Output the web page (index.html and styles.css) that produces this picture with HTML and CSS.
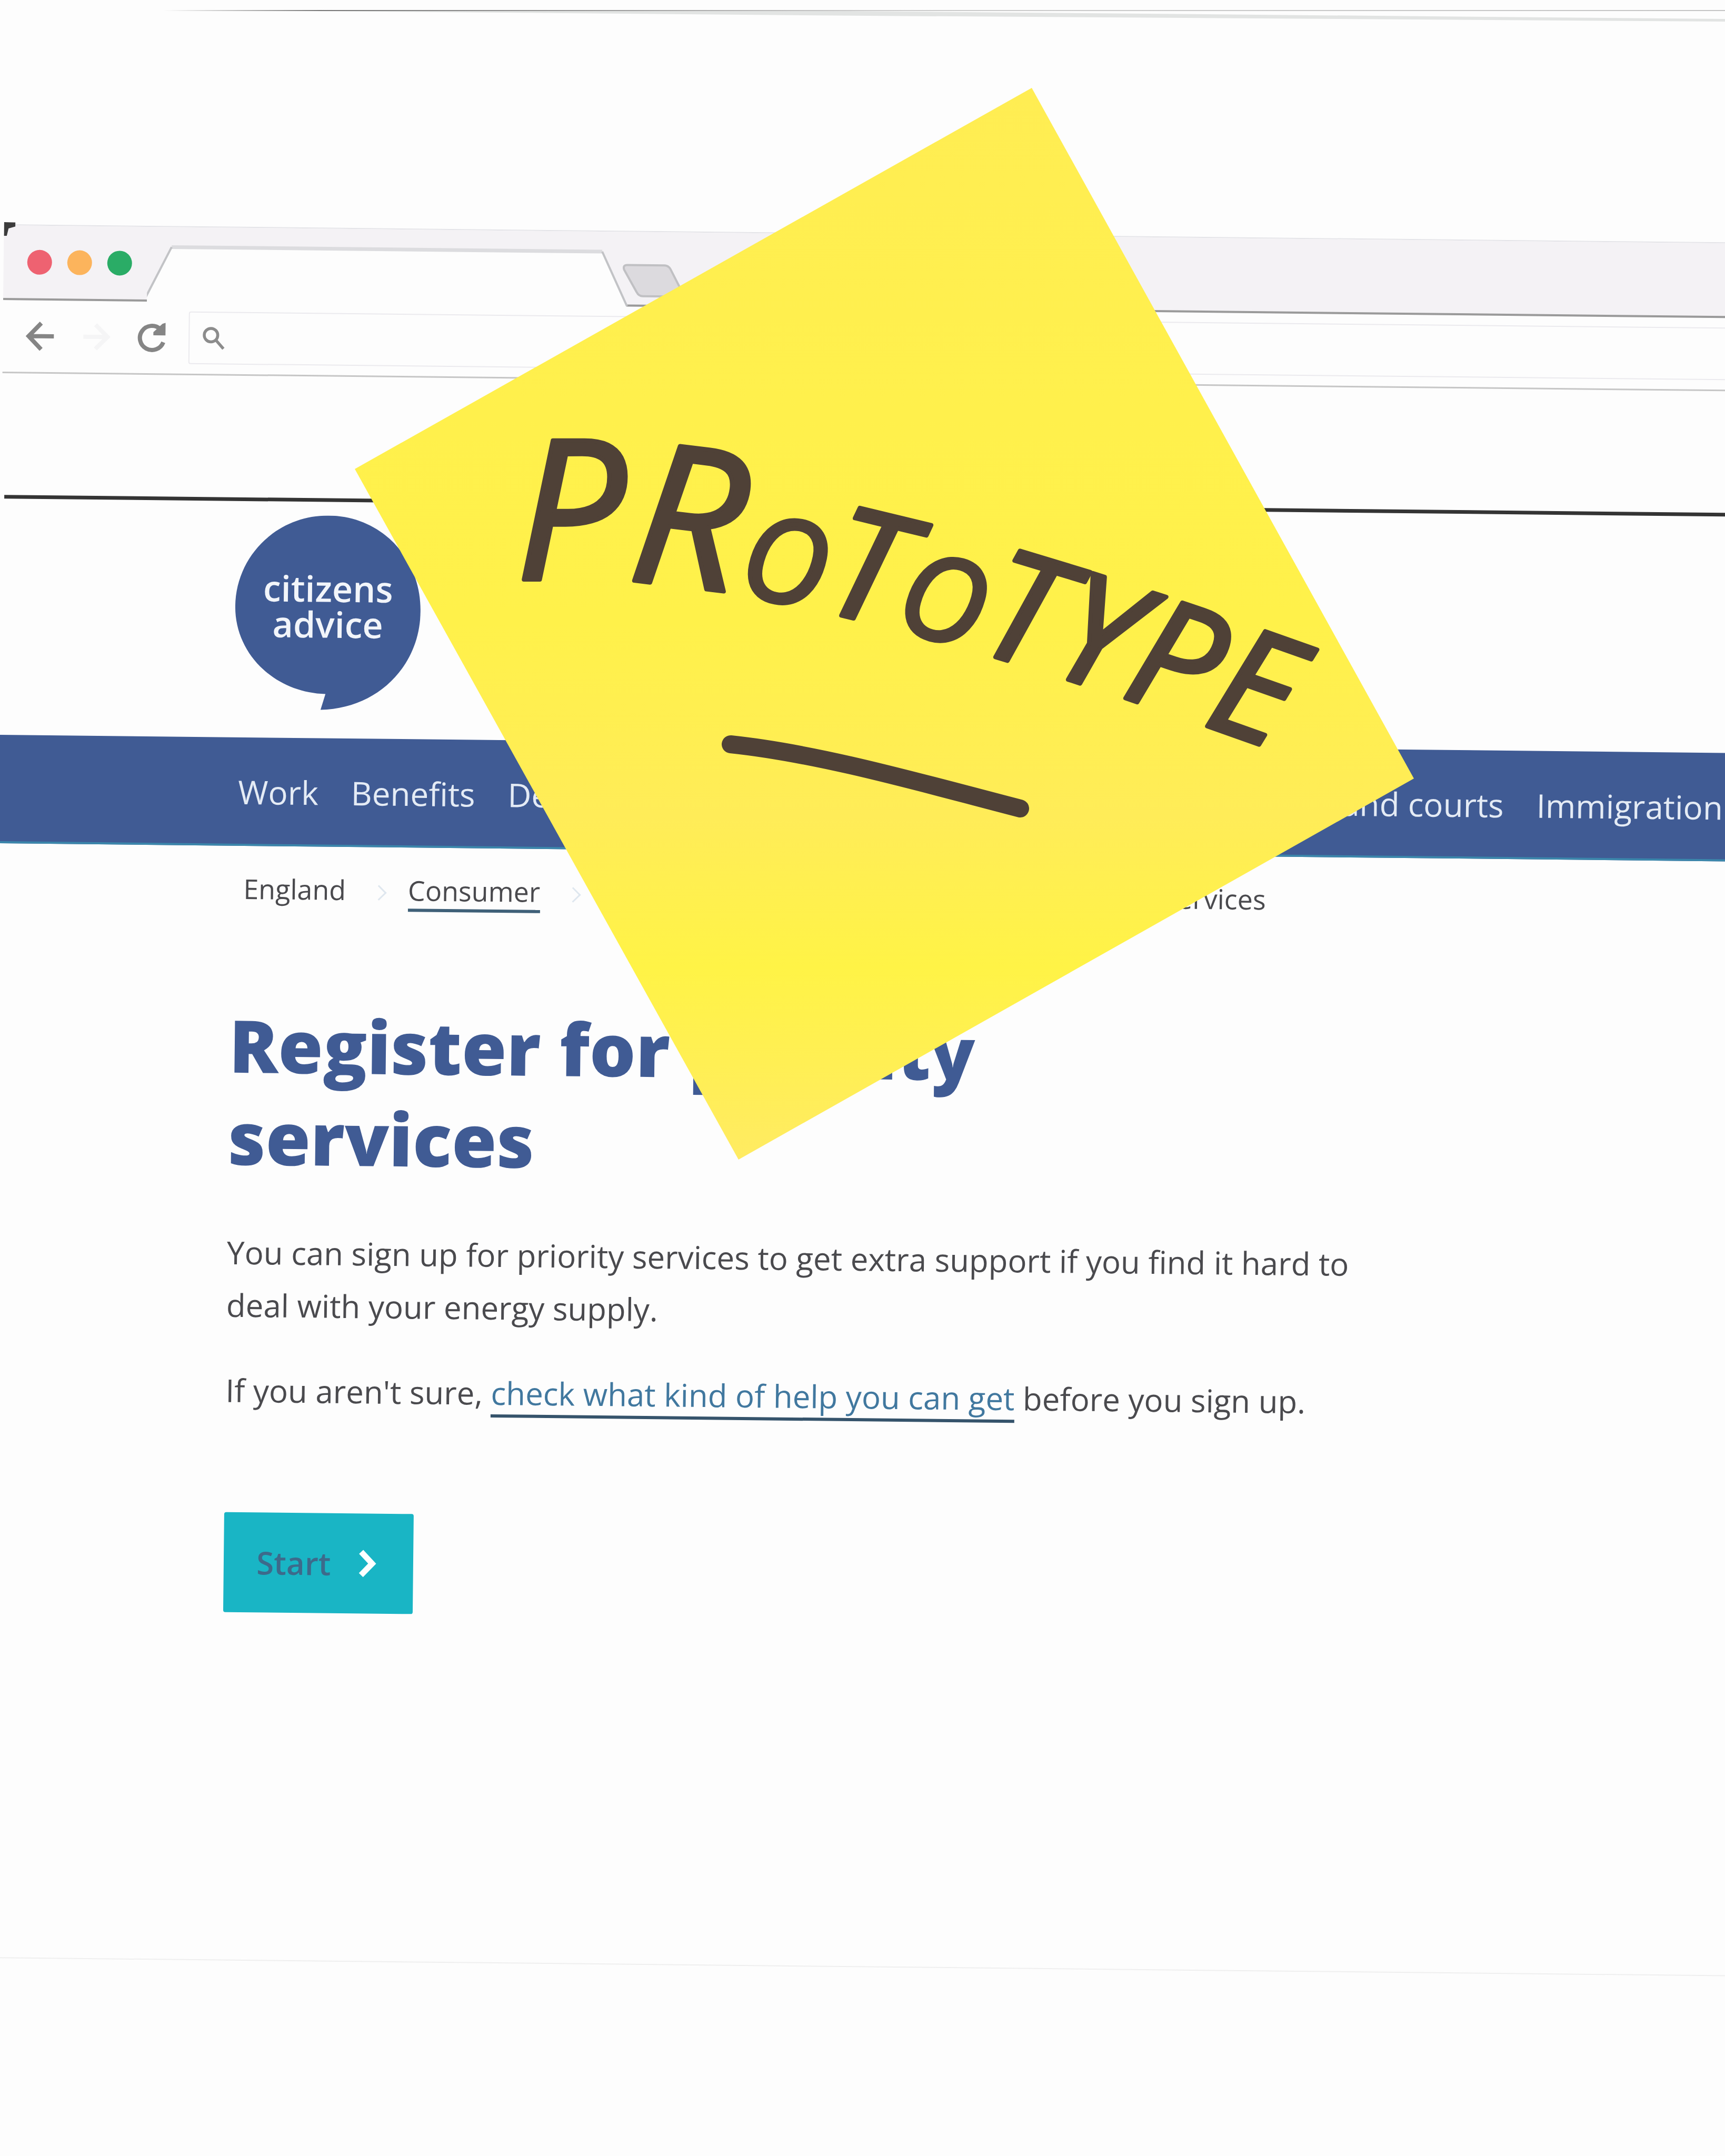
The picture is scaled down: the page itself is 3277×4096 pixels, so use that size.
FILE: index.html
```html
<!DOCTYPE html>
<html lang="en">
<head>
<meta charset="utf-8">
<title>Register for priority services</title>
<link rel="stylesheet" href="styles.css">
</head>
<body>
<svg class="paper-edge" viewBox="0 0 3277 44" preserveAspectRatio="none" aria-hidden="true">
  <defs>
    <linearGradient id="edge" x1="0" x2="1" y1="0" y2="0">
      <stop offset="0" stop-color="#fdfdfd"/><stop offset=".1" stop-color="#777"/><stop offset=".28" stop-color="#999"/><stop offset=".45" stop-color="#ccc"/><stop offset="1" stop-color="#c4c4c4"/>
    </linearGradient>
  </defs>
  <path fill="#e2e4e3" d="M480 20 H1500 L3277 36 V41 L1650 30 Z"/>
  <rect fill="url(#edge)" x="310" y="19" width="2967" height="2"/>
</svg>
<div class="sheet">
  <div class="browser">
    <div class="tab-strip">
      <span class="dot dot-red"></span><span class="dot dot-amber"></span><span class="dot dot-green"></span>
      <svg class="tabs" viewBox="8 0 1040 144" aria-hidden="true">
        <path class="tab-fill" d="M2 144 L54 38 H872 L920 144 Z"/>
        <path class="tab-top" d="M54 38 H872"/>
        <path class="tab-line" d="M2 141 L54 38 M872 38 L920 141"/>
        <path class="tab-new" d="M920 63 H990 Q998 63 1002 70 L1024 112 Q1028 122 1018 122 H950 Q942 122 938 114 L914 72 Q911 63 920 63 Z"/>
      </svg>
    </div>
    <div class="toolbar">
      <button class="tool" aria-label="Back"><svg viewBox="0 0 56 56"><path d="M54 28 H8 M30 3 L6 28 L30 53"/></svg></button>
      <button class="tool tool-off" aria-label="Forward"><svg viewBox="0 0 56 56"><path d="M4 28 H48 M27 5 L50 28 L27 51"/></svg></button>
      <button class="tool" aria-label="Reload"><svg viewBox="0 0 56 56"><path d="M50 37 A23 23 0 1 1 44 12"/><path class="solid" d="M54 0 V24 H31 V18 L48 2 Z"/></svg></button>
      <label class="address"><svg viewBox="0 0 48 48"><circle cx="18" cy="18" r="14"/><path d="M28 28 L44 46"/></svg><input type="text" aria-label="Address"></label>
    </div>
  </div>
  <header class="masthead">
    <a class="logo" href="#">
      <svg class="bubble" viewBox="0 0 352 370" aria-hidden="true"><path d="M176 0 C275 0 352 78 352 180 C352 284 272 366 164 369 L173 339 C74 337 0 262 0 174 C0 78 78 0 176 0 Z"/></svg>
      <span>citizens<br>advice</span>
    </a>
  </header>
  <nav class="main-nav">
    <a href="#">Work</a><a href="#">Benefits</a><a href="#">Debt and money</a><a href="#">Consumer</a><a href="#">Housing</a><a href="#">Family</a><a href="#">Law and courts</a><a href="#">Immigration</a>
  </nav>
  <ol class="crumbs">
    <li>England</li>
    <li><a href="#">Consumer</a></li>
    <li><a href="#">Your energy supply</a></li>
    <li>Register for priority services</li>
  </ol>
  <main class="content">
    <h1>Register for priority services</h1>
    <p>You can sign up for priority services to get extra support if you find it hard to deal with your energy supply.</p>
    <p>If you aren't sure, <a href="#">check what kind of help you can get</a> before you sign up.</p>
    <button class="start">Start <svg viewBox="0 0 36 54" aria-hidden="true"><path d="M7 5 L28 27 L7 49"/></svg></button>
  </main>
  <div class="paper-foot"></div>
</div>
<svg class="note" viewBox="674 167 2012 2036" role="img" aria-label="Prototype">
  <defs>
    <linearGradient id="paper" x1="0" y1="0" x2="0" y2="1">
      <stop offset="0" stop-color="#ffed53"/><stop offset=".3" stop-color="#fff04c"/><stop offset=".5" stop-color="#fff14a"/><stop offset=".68" stop-color="#ffec58"/><stop offset=".82" stop-color="#fff346"/><stop offset="1" stop-color="#ffeb62"/>
    </linearGradient>
    <path id="baseline" d="M980 1105 C1300 1080 1700 1165 2440 1432"/>
  </defs>
  <path fill="url(#paper)" d="M1960 167 L2686 1479 L1403 2203 L674 891 Z"/>
  <text class="marker"><textPath href="#baseline"><tspan class="m-xl">PR</tspan><tspan class="m-s">O</tspan><tspan class="m-l">T</tspan><tspan class="m-s">O</tspan><tspan class="m-l">TYPE</tspan></textPath></text>
  <path class="stroke" d="M1388 1414 C1560 1432 1760 1490 1938 1536"/>
</svg>
</body>
</html>
```
FILE: styles.css
```css
* { box-sizing: border-box; }
html { background: #fdfdfd; overflow: hidden; }
body { margin: 0; min-height: 100vh; position: relative; overflow: hidden; font-family: "Open Sans", "Noto Sans", sans-serif; color: #4a4a4e; }
a { color: inherit; text-decoration: none; }
button { font: inherit; border: 0; padding: 0; background: none; }
svg { display: block; }

.paper-edge { width: 100%; height: 44px; }

/* the printed page lies slightly askew */
.sheet { position: relative; margin-right: -48px; padding-top: 382px; transform: rotate(0.6deg); transform-origin: 0 -44px; }

.browser { position: relative; margin-left: 12px; border-top: 2px solid #e4e4e8; border-bottom: 3px solid #c6c6c6; }
.browser::before { content: ""; position: absolute; left: 0; top: -6px; width: 22px; height: 26px; background: #3c3c3c; clip-path: polygon(0 0, 100% 0, 100% 30%, 40% 45%, 25% 100%, 0 100%); }
.tab-strip { display: flex; align-items: center; gap: 29px; height: 142px; padding-left: 45px; background: #f4f2f5; border-bottom: 4px solid #9a9a9a; }
.dot { width: 47px; height: 47px; border-radius: 50%; }
.dot-red { background: #ee6271; }
.dot-amber { background: #fcb45c; }
.dot-green { background: #2aac66; }
.tabs { flex: none; align-self: flex-start; width: 1040px; height: 144px; }
.tab-fill { fill: #fdfdfd; }
.tab-top { fill: none; stroke: #dcdcdf; stroke-width: 7; }
.tab-line { fill: none; stroke: #c2c3c6; stroke-width: 4; }
.tab-new { fill: #dcdade; stroke: #c0c0c3; stroke-width: 4; }

.toolbar { display: flex; align-items: center; gap: 50px; height: 136px; padding-left: 43px; }
.tool { width: 56px; height: 56px; }
.tool svg { width: 56px; height: 56px; fill: none; stroke: #858585; stroke-width: 8; }
.tool .solid { fill: #858585; stroke: none; }
.tool-off svg { stroke: #f5f5f6; }
.address { flex: 1; display: flex; align-items: center; gap: 20px; height: 100px; margin-left: -8px; padding-left: 24px; border: 2px solid #ebeaee; border-radius: 4px; }
.address svg { width: 44px; height: 44px; fill: none; stroke: #8c8c8c; stroke-width: 6; }
.address input { flex: 1; border: 0; background: none; font: inherit; font-size: 52px; }

.masthead { margin: 231px 0 0 18px; height: 456px; padding: 26px 0 0 441px; border-top: 7px solid #343434; }
.logo { display: grid; width: 352px; color: #f2f5fa; font-size: 68px; font-weight: 600; line-height: 68px; text-align: center; }
.logo > * { grid-area: 1 / 1; }
.logo span { padding-top: 104px; }
.bubble { width: 352px; height: 370px; fill: #405b94; }

.main-nav { display: flex; align-items: center; gap: 62px; height: 206px; padding: 4px 0 0 468px; background: #405b94; border-bottom: 4px solid #3b86ab; color: #e4ebf5; font-size: 62px; line-height: 84px; white-space: nowrap; }

.crumbs { display: flex; gap: 118px; margin: 0; padding: 46px 0 0 480px; list-style: none; font-size: 52px; line-height: 70px; white-space: nowrap; }
.crumbs li { position: relative; }
.crumbs li + li::before { content: ""; position: absolute; left: -66px; top: 30px; width: 18px; height: 18px; border: solid #dfe7ef; border-width: 3px 3px 0 0; transform: rotate(45deg); }
.crumbs a { display: block; border-bottom: 6px solid #3f6078; }

.content { padding: 168px 0 0 456px; width: 2640px; }
h1 { margin: 0 0 82px; max-width: 1700px; color: #405b94; font-size: 138px; font-weight: 800; line-height: 175px; }
p { margin: 0 0 62px; font-size: 60px; line-height: 100px; }
p a { color: #41789f; border-bottom: 6px solid #35536b; }
.start { display: flex; align-items: center; justify-content: center; gap: 50px; width: 360px; height: 190px; padding-right: 8px; margin-top: 182px; border-radius: 4px; background: #19b5c5; color: #3d6a8b; font-size: 60px; font-weight: 600; }
.start svg { width: 36px; height: 54px; fill: none; stroke: #fff; stroke-width: 11; }
.paper-foot { margin-top: 660px; border-top: 2px solid #efefef; }

/* sticky note laid over the page */
.note { position: absolute; left: 674px; top: 167px; width: 2012px; height: 2036px; }
.marker { font-family: "Open Sans", sans-serif; font-style: italic; fill: #4f4137; stroke: #4f4137; stroke-width: 8; stroke-linejoin: round; }
.m-s { font-size: 220px; }
.m-l { font-size: 290px; }
.m-xl { font-size: 370px; }
.stroke { fill: none; stroke: #4f4137; stroke-width: 34; stroke-linecap: round; }
```
